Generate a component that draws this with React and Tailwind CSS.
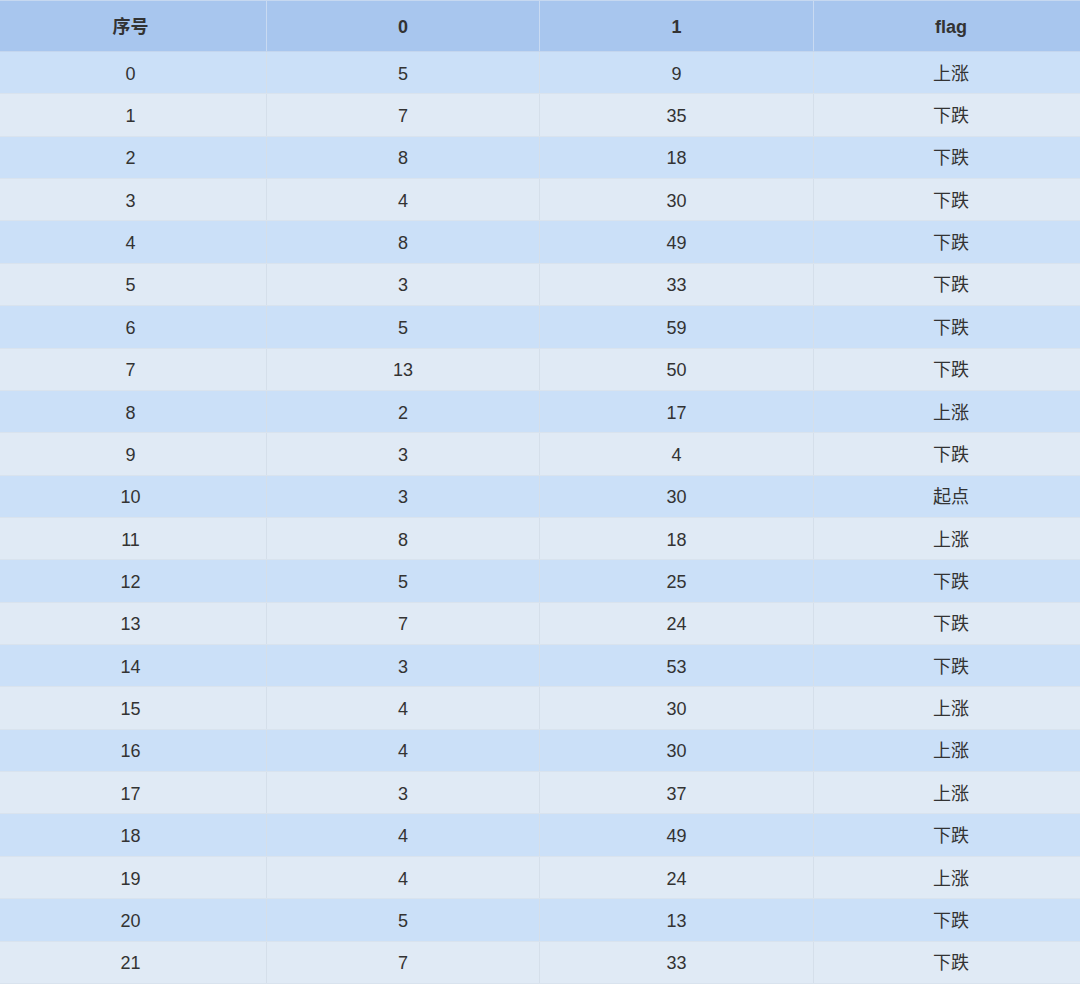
import React from 'react';

const rows = [
    [0, 5, 9, '上涨'],
    [1, 7, 35, '下跌'],
    [2, 8, 18, '下跌'],
    [3, 4, 30, '下跌'],
    [4, 8, 49, '下跌'],
    [5, 3, 33, '下跌'],
    [6, 5, 59, '下跌'],
    [7, 13, 50, '下跌'],
    [8, 2, 17, '上涨'],
    [9, 3, 4, '下跌'],
    [10, 3, 30, '起点'],
    [11, 8, 18, '上涨'],
    [12, 5, 25, '下跌'],
    [13, 7, 24, '下跌'],
    [14, 3, 53, '下跌'],
    [15, 4, 30, '上涨'],
    [16, 4, 30, '上涨'],
    [17, 3, 37, '上涨'],
    [18, 4, 49, '下跌'],
    [19, 4, 24, '上涨'],
    [20, 5, 13, '下跌'],
    [21, 7, 33, '下跌'],
];

// table is a bit wider than the shot, first and last column get cropped
const widths = ['w-[267px] pr-[5px]', 'w-[273px]', 'w-[274px]', 'w-[274px]'];

const App = () => {
    return (
        <div className='w-[1080px] h-[984px] overflow-hidden bg-white text-[#333] text-[18px]' style={{ fontFamily: '"Liberation Sans", "Noto Sans CJK SC", sans-serif' }}>
            {/* header */}
            <div className='flex h-[52px] bg-[#a8c6ee] border-t border-[#c6d8f0] border-b border-b-[#c4d6ee] font-bold'>
                {['序号', '0', '1', 'flag'].map((h, i) => (
                    <div key={i} className={`${widths[i]} shrink-0 pt-[2px] flex items-center justify-center ${i < 3 ? 'border-r border-[#c9daf1]' : ''}`}>
                        {h}
                    </div>
                ))}
            </div>
            {rows.map((r, idx) => (
                <div key={idx} className={`flex h-[42.36px] border-b border-[#d9e3ee] ${idx % 2 === 0 ? 'bg-[#cbe0f8]' : 'bg-[#e0eaf5]'}`}>
                    {r.map((c, i) => (
                        <div key={i} className={`${widths[i]} shrink-0 pt-[3px] flex items-center justify-center ${i < 3 ? 'border-r border-[#d5dfea]' : ''}`}>
                            {c}
                        </div>
                    ))}
                </div>
            ))}
        </div>
    );
};

export default App;
